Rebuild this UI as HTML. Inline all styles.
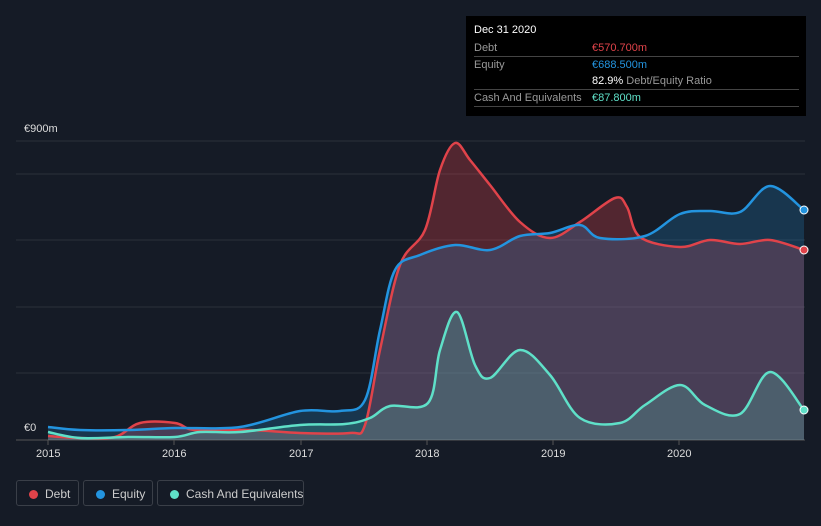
<!DOCTYPE html>
<html><head><style>
body{margin:0;width:821px;height:526px;background:#151b26;font-family:"Liberation Sans",sans-serif;overflow:hidden;position:relative}
.tt{position:absolute;left:466px;top:16px;width:340px;height:100px;background:#000;color:#fff;font-size:11px}
.tt .r{position:absolute;left:8px;width:325px;border-bottom:1px solid #444;height:16px;line-height:16px;color:#999}
.tt .v{position:absolute;left:118px}
.leg{position:absolute;top:480px;height:26px;border:1px solid #3a3f48;border-radius:3px;color:#ccc;font-size:12px;line-height:26px;box-sizing:border-box;white-space:nowrap}
.leg i{position:absolute;left:12px;top:9px;width:9px;height:9px;border-radius:50%}
.leg span{position:absolute;left:28px}
.ax{position:absolute;color:#ddd;font-size:11px}
</style></head><body>
<svg width="821" height="526" style="position:absolute;left:0;top:0">
<g stroke="#2a303b" stroke-width="1">
<line x1="16" y1="141" x2="805" y2="141"/><line x1="16" y1="174" x2="805" y2="174"/><line x1="16" y1="240" x2="805" y2="240"/><line x1="16" y1="307" x2="805" y2="307"/><line x1="16" y1="373" x2="805" y2="373"/>
</g>
<line x1="16" y1="440" x2="805" y2="440" stroke="#555" />
<g stroke="#555"><line x1="48" y1="440" x2="48" y2="445"/><line x1="174" y1="440" x2="174" y2="445"/><line x1="301" y1="440" x2="301" y2="445"/><line x1="427" y1="440" x2="427" y2="445"/><line x1="553" y1="440" x2="553" y2="445"/><line x1="679" y1="440" x2="679" y2="445"/></g>
<path id="fd" fill="#e0434a" fill-opacity="0.3"/>
<path id="fe" fill="#2394df" fill-opacity="0.22"/>
<path id="fc" fill="#5fe0c8" fill-opacity="0.2"/>
<g fill="none" stroke-width="2.5" stroke-linejoin="round">
<path id="ld" stroke="#e0434a"/><path id="le" stroke="#2394df"/><path id="lc" stroke="#5fe0c8"/>
</g>
<circle cx="804" cy="250" r="4" fill="#e0434a" stroke="#fff"/><circle cx="804" cy="210" r="4" fill="#2394df" stroke="#fff"/><circle cx="804" cy="410" r="4" fill="#5fe0c8" stroke="#fff"/>
</svg>
<script>
function cr(p){var d="M"+p[0][0]+","+p[0][1];for(var i=0;i<p.length-1;i++){var a=p[i-1]||p[i],b=p[i],c=p[i+1],e=p[i+2]||c;var t=6;d+=" C"+(b[0]+(c[0]-a[0])/t)+","+(b[1]+(c[1]-a[1])/t)+" "+(c[0]-(e[0]-b[0])/t)+","+(c[1]-(e[1]-b[1])/t)+" "+c[0]+","+c[1];}return d;}
function P(s){return s.trim().split(/\s+/).map(function(x){return x.split(",").map(Number)});}
var D=P("48,436 80,438 115,437 140,423 175,423 195,430 250,430 300,433 350,433 365,425 380,350 400,265 425,230 440,170 455,143 470,160 490,185 520,222 550,238 580,222 615,198 627,207 640,237 680,247 710,240 740,244 770,240 804,250");
var E=P("48,427 80,430 130,430 175,428 240,427 300,411 340,411 365,400 380,330 395,270 420,255 455,245 490,250 520,236 550,233 580,225 600,238 645,236 680,214 710,211 740,212 770,186 804,210");
var C=P("48,432 80,438 130,437 175,437 200,432 240,432 300,425 345,424 370,418 390,406 428,403 440,350 457,312 475,365 490,378 520,350 550,375 580,418 620,423 645,405 680,385 705,405 740,414 770,372 804,410");
[[D,"d"],[E,"e"],[C,"c"]].forEach(function(q){var d=cr(q[0]);document.getElementById("l"+q[1]).setAttribute("d",d);document.getElementById("f"+q[1]).setAttribute("d",d+" L804,440 L48,440 Z");});
</script>
<div class="ax" style="left:24px;top:123px">€900m</div>
<div class="ax" style="left:24px;top:422px">€0</div>
<div class="ax" style="left:36px;top:448px">2015</div><div class="ax" style="left:162px;top:448px">2016</div><div class="ax" style="left:289px;top:448px">2017</div><div class="ax" style="left:415px;top:448px">2018</div><div class="ax" style="left:541px;top:448px">2019</div><div class="ax" style="left:667px;top:448px">2020</div>
<div class="tt">
<div style="position:absolute;left:8px;top:8px">Dec 31 2020</div>
<div class="r" style="top:24px">Debt<span class="v" style="color:#e0434a">€570.700m</span></div>
<div class="r" style="top:41px;border:0">Equity<span class="v" style="color:#2394df">€688.500m</span></div>
<div class="r" style="top:57px"><span class="v"><b style="color:#fff;font-weight:normal">82.9%</b> Debt/Equity Ratio</span></div>
<div class="r" style="top:74px">Cash And Equivalents<span class="v" style="color:#5fe0c8">€87.800m</span></div>
</div>
<div class="leg" style="left:16px;width:63px"><i style="background:#e0434a"></i><span>Debt</span></div>
<div class="leg" style="left:83px;width:70px"><i style="background:#2394df"></i><span>Equity</span></div>
<div class="leg" style="left:157px;width:147px"><i style="background:#5fe0c8"></i><span>Cash And Equivalents</span></div>
</body></html>
